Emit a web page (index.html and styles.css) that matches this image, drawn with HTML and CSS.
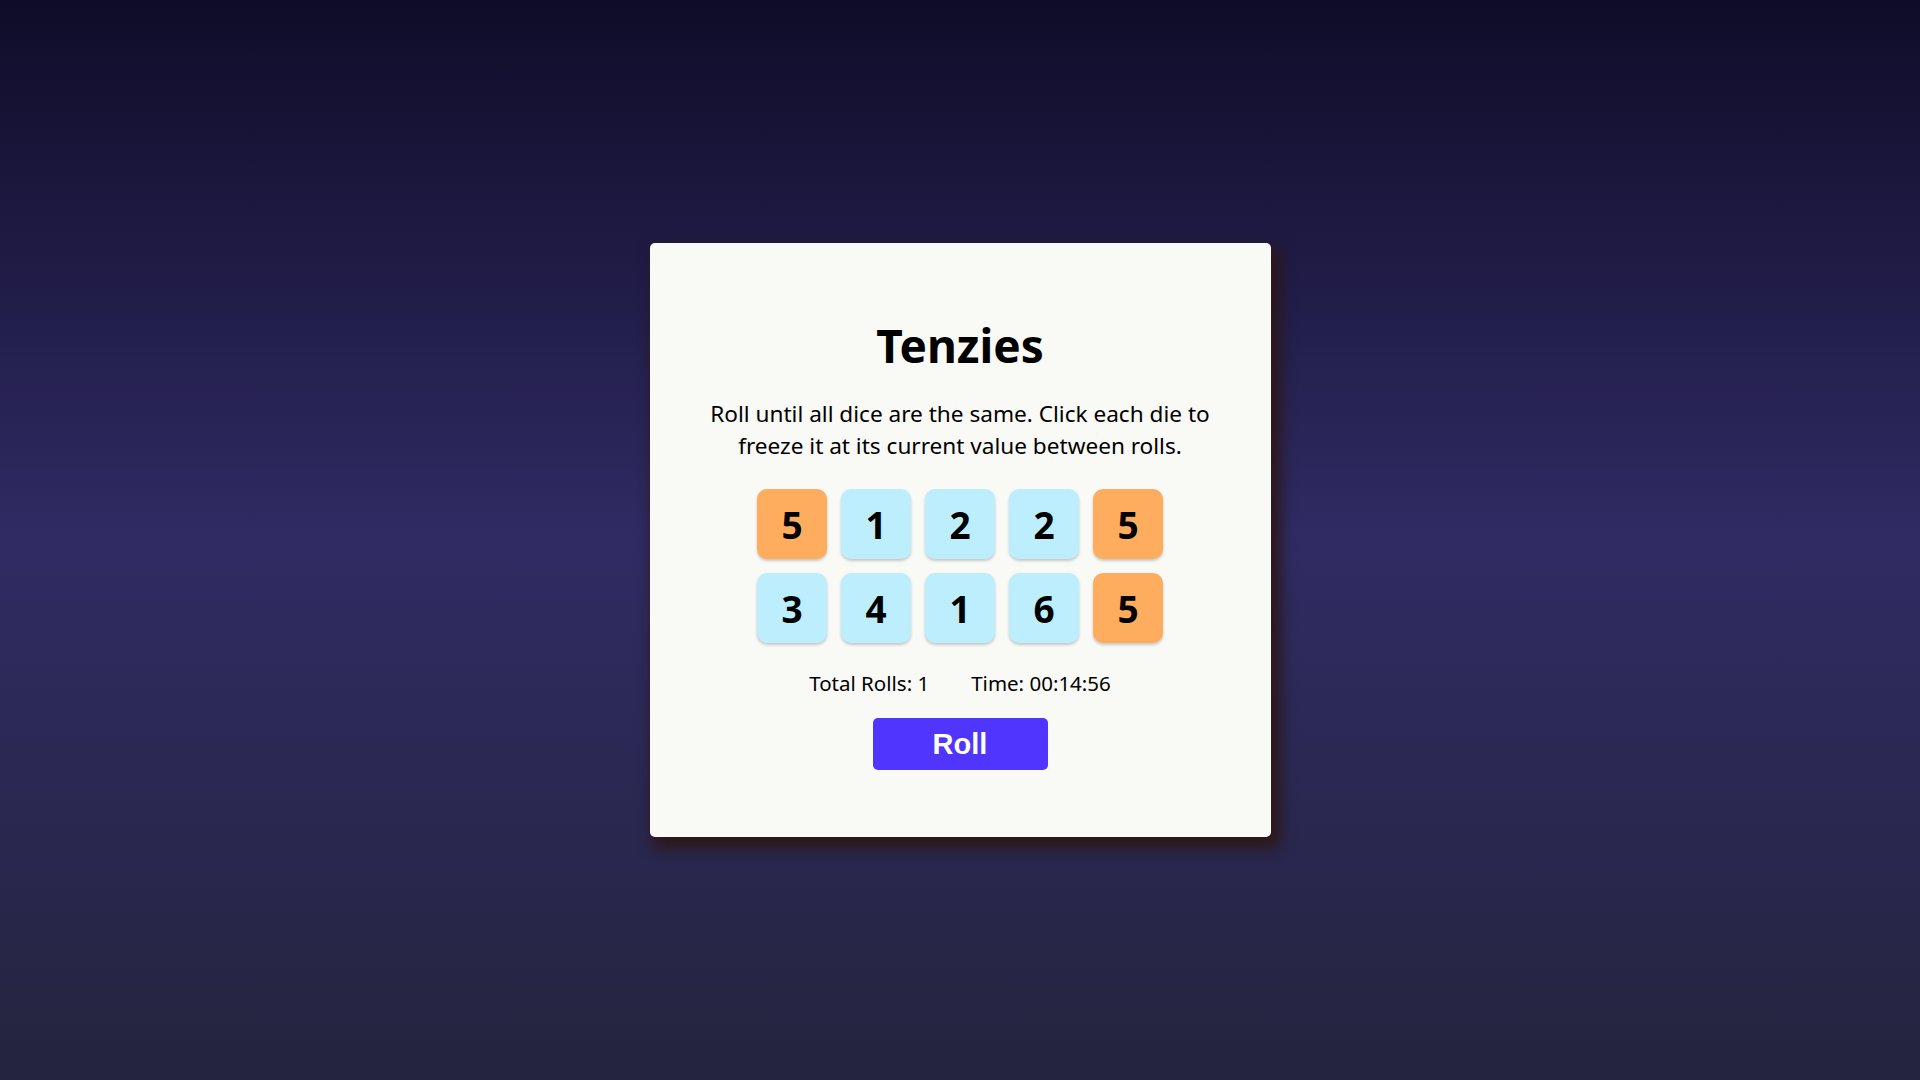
FILE: index.html
```html
<!DOCTYPE html>
<html lang="en">
<head>
<meta charset="utf-8">
<title>Tenzies</title>
<link rel="stylesheet" href="styles.css">
</head>
<body>
<main class="card">
  <h1 class="title">Tenzies</h1>
  <p class="instructions">Roll until all dice are the same. Click each die to freeze it at its current value between rolls.</p>
  <div class="dice">
    <button class="die held">5</button>
    <button class="die">1</button>
    <button class="die">2</button>
    <button class="die">2</button>
    <button class="die held">5</button>
    <button class="die">3</button>
    <button class="die">4</button>
    <button class="die">1</button>
    <button class="die">6</button>
    <button class="die held">5</button>
  </div>
  <div class="stats">
    <span>Total Rolls: 1</span>
    <span>Time: 00:14:56</span>
  </div>
  <button class="roll">Roll</button>
</main>
</body>
</html>
```
FILE: styles.css
```css
* { box-sizing: border-box; }
html, body { height: 100%; }
body {
  margin: 0;
  background: linear-gradient(to bottom, #0f0c29, #302b63, #24243e);
  display: flex;
  align-items: center;
  justify-content: center;
  font-family: "Noto Sans", "Open Sans", sans-serif;
  color: #000;
}
.card {
  width: 621px;
  height: 594px;
  background: #f9f9f6;
  border-radius: 5px;
  box-shadow: 6px 8px 14px 4px #2c181b;
  display: flex;
  flex-direction: column;
  align-items: center;
  padding-top: 72px;
}
.title {
  margin: 0;
  font-size: 46px;
  font-weight: 700;
  line-height: 60px;
}
.instructions {
  margin: 23px 0 0;
  width: 540px;
  text-align: center;
  font-size: 22.6px;
  line-height: 31.5px;
}
.dice {
  margin-top: 28px;
  display: grid;
  grid-template-columns: repeat(5, 70px);
  grid-auto-rows: 70px;
  gap: 14px;
}
.die {
  border: none;
  border-radius: 10px;
  background: #bdeefd;
  box-shadow: 0 2px 3px rgba(0, 0, 0, 0.2);
  font-family: "Noto Sans", sans-serif;
  font-weight: 700;
  font-size: 37px;
  color: #000;
  display: flex;
  align-items: center;
  justify-content: center;
  padding: 0;
}
.die.held { background: #fdad5d; }
.stats {
  margin-top: 25px;
  display: flex;
  gap: 42px;
  font-size: 20.5px;
  line-height: 30px;
}
.roll {
  margin-top: 20px;
  width: 175px;
  height: 52px;
  border: none;
  border-radius: 5px;
  background: #5035ff;
  color: #fff;
  font-family: "Liberation Sans", Arial, sans-serif;
  font-weight: 700;
  font-size: 29px;
  padding: 0;
}
```
